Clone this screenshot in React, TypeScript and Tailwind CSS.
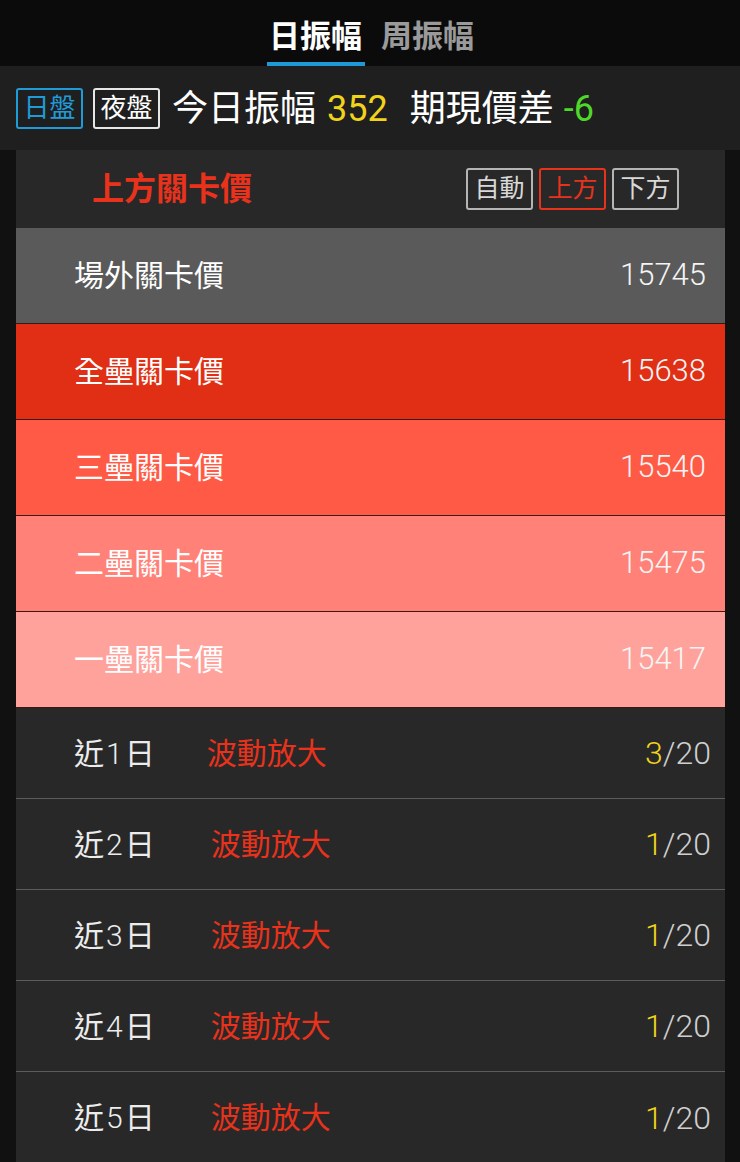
import React from 'react';

const font = { fontFamily: '"Liberation Sans", "Noto Sans CJK TC", sans-serif' };
const num = { fontFamily: 'Roboto, "Liberation Sans", sans-serif' };

const levels = [
  { name: '場外關卡價', value: '15745', bg: 'bg-[#5a5a5a]' },
  { name: '全壘關卡價', value: '15638', bg: 'bg-[#e02f14]' },
  { name: '三壘關卡價', value: '15540', bg: 'bg-[#ff5a45]' },
  { name: '二壘關卡價', value: '15475', bg: 'bg-[#ff8177]' },
  { name: '一壘關卡價', value: '15417', bg: 'bg-[#ffa29c]' },
];

const recent = [
  { n: '1', hit: '3', gap: 'ml-[52px]' },
  { n: '2', hit: '1', gap: 'ml-[56px]' },
  { n: '3', hit: '1', gap: 'ml-[56px]' },
  { n: '4', hit: '1', gap: 'ml-[56px]' },
  { n: '5', hit: '1', gap: 'ml-[56px]' },
];

export default function App() {
  return (
    <div className="w-[740px] h-[1162px] bg-[#111111] overflow-hidden text-white" style={font}>
      <div className="h-[66px] bg-[#0b0b0b] flex justify-center items-end gap-[16px]">
        <div className="flex flex-col items-center">
          <span className="text-[31px] font-bold leading-none text-white mb-[10px] px-[3px]">日振幅</span>
          <div className="h-[4px] w-[98px] bg-[#1e9ad6]" />
        </div>
        <span className="text-[31px] font-bold leading-none text-[#9a9a9a] mb-[14px]">周振幅</span>
      </div>

      <div className="h-[84px] bg-[#1f1f1f] flex items-center pl-[16px] gap-[10px]">
        <span className="h-[41px] w-[67px] border-2 border-[#1f9bd7] rounded-[3px] text-[#1f9bd7] text-[26px] flex items-center justify-center">日盤</span>
        <span className="h-[41px] w-[67px] border-2 border-[#e6e6e6] rounded-[3px] text-white text-[26px] flex items-center justify-center">夜盤</span>
        <div className="flex items-center ml-[2px] mt-[2px] whitespace-nowrap text-[36px]">
          <span>今日振幅</span>
          <span className="text-[#f2d31b] ml-[11px]" style={num}>352</span>
          <span className="ml-[22px]">期現價差</span>
          <span className="text-[#4fd82a] ml-[10px]" style={num}>-6</span>
        </div>
      </div>

      <div className="mx-[16px] w-[709px] bg-[#282828]">
        <div className="h-[78px] flex items-center justify-between pl-[76px] pr-[46px]">
          <span className="text-[32px] font-bold text-[#e8321c]">上方關卡價</span>
          <div className="flex gap-[6px]">
            <span className="h-[42px] w-[67px] border-2 border-[#b5b5b5] rounded-[3px] text-[#d8d8d8] text-[25px] flex items-center justify-center">自動</span>
            <span className="h-[42px] w-[67px] border-2 border-[#e8321c] rounded-[3px] text-[#e8321c] text-[25px] flex items-center justify-center">上方</span>
            <span className="h-[42px] w-[67px] border-2 border-[#b5b5b5] rounded-[3px] text-[#d8d8d8] text-[25px] flex items-center justify-center">下方</span>
          </div>
        </div>

        {levels.map((l) => (
          <div key={l.name} className={`h-[96px] ${l.bg} border-b border-[#3a1a14] flex items-center justify-between pl-[58px] pr-[19px]`}>
            <span className="text-[30px]">{l.name}</span>
            <span className="text-[31px] font-light text-[#f4f4f4]" style={num}>{l.value}</span>
          </div>
        ))}

        {recent.map((r, i) => (
          <div key={r.n} className={`h-[91px] flex items-center pl-[58px] pr-[14px] ${i < recent.length - 1 ? 'border-b border-[#5c5c5c]' : ''}`}>
            <span className="text-[30px] text-[#ececec]">近<span className="font-light px-[2px]" style={num}>{r.n}</span>日</span>
            <span className={`text-[30px] text-[#e8321c] ${r.gap}`}>波動放大</span>
            <span className="ml-auto text-[32px] font-light text-[#cfcfcf]" style={num}><span className="text-[#f2d31b]">{r.hit}</span>/20</span>
          </div>
        ))}
      </div>
    </div>
  );
}
